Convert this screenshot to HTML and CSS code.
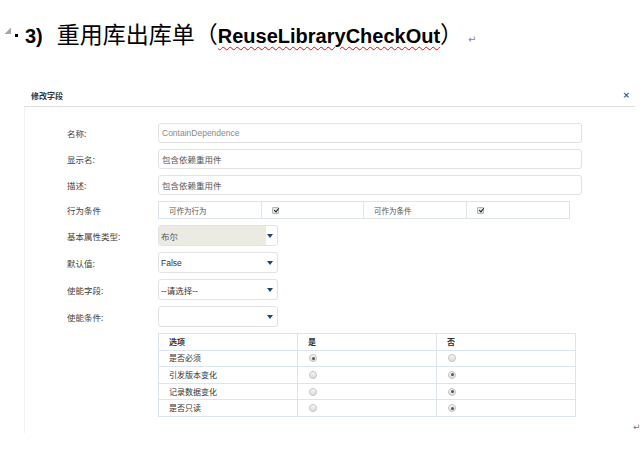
FILE: index.html
```html
<!DOCTYPE html>
<html lang="zh">
<head>
<meta charset="utf-8">
<link rel="stylesheet" href="styles.css">
</head>
<body>
<div class="doc">
  <div class="title">
    <span class="mark"></span><span class="bullet"></span>
    <span class="num">3)</span>
    <span class="cn">重用库出库单（</span><span class="en">ReuseLibraryCheckOut</span><span class="cn">）</span><span class="ret">↵</span>
  </div>

  <div class="panel">
    <div class="panel-head">
      <span class="panel-title">修改字段</span>
      <span class="close">×</span>
    </div>
    <div class="panel-body">
      <div class="row">
        <span class="label">名称:</span>
        <div class="input muted">ContainDependence</div>
      </div>
      <div class="row">
        <span class="label">显示名:</span>
        <div class="input">包含依赖重用件</div>
      </div>
      <div class="row">
        <span class="label">描述:</span>
        <div class="input">包含依赖重用件</div>
      </div>
      <div class="row">
        <span class="label">行为条件</span>
        <div class="behave">
          <div class="bcell">可作为行为</div>
          <div class="bcell"><span class="check"></span></div>
          <div class="bcell">可作为条件</div>
          <div class="bcell"><span class="check"></span></div>
        </div>
      </div>
      <div class="row">
        <span class="label">基本属性类型:</span>
        <div class="select disabled"><span class="val">布尔</span><span class="arrow"></span></div>
      </div>
      <div class="row">
        <span class="label">默认值:</span>
        <div class="select"><span class="val muted2">False</span><span class="arrow"></span></div>
      </div>
      <div class="row">
        <span class="label">使能字段:</span>
        <div class="select"><span class="val">--请选择--</span><span class="arrow"></span></div>
      </div>
      <div class="row">
        <span class="label">使能条件:</span>
        <div class="select"><span class="val"></span><span class="arrow"></span></div>
      </div>
      <div class="row top">
        <span class="label"></span>
        <table class="opts">
          <tr><th>选项</th><th>是</th><th>否</th></tr>
          <tr><td>是否必须</td><td><span class="radio on"></span></td><td><span class="radio"></span></td></tr>
          <tr><td>引发版本变化</td><td><span class="radio"></span></td><td><span class="radio on"></span></td></tr>
          <tr><td>记录数据变化</td><td><span class="radio"></span></td><td><span class="radio on"></span></td></tr>
          <tr><td>是否只读</td><td><span class="radio"></span></td><td><span class="radio on"></span></td></tr>
        </table>
      </div>
    </div>
  </div>
  <span class="ret-end">↵</span>
</div>
</body>
</html>
```

FILE: styles.css
```css
* { box-sizing: border-box; }
html, body { margin: 0; padding: 0; background: #fff; }
body {
  width: 642px;
  height: 464px;
  overflow: hidden;
  font-family: "Liberation Sans", "Noto Sans CJK SC", sans-serif;
  color: #333;
}
.doc { position: relative; height: 464px; }

/* heading line */
.title {
  height: 85px;
  padding: 16px 0 0 5px;
  display: flex;
  align-items: baseline;
  line-height: 32px;
  white-space: nowrap;
}
.mark {
  display: inline-block;
  width: 6px; height: 6px;
  background: linear-gradient(to bottom right, transparent 50%, #a8a8a8 50%);
  margin-right: 4px;
  transform: translateY(-9px);
}
.bullet {
  display: inline-block;
  width: 3px; height: 3px;
  background: #000;
  margin-right: 7px;
  transform: translateY(-6px);
}
.num {
  font: bold 20px "Liberation Sans", sans-serif;
  color: #000;
  margin-right: 14px;
}
.cn {
  font: 23px "Noto Sans CJK SC", sans-serif;
  color: #000;
}
.en {
  font: bold 20px "Liberation Sans", sans-serif;
  color: #000;
  text-decoration: underline wavy #e01010;
  text-decoration-thickness: 1px;
  text-underline-offset: 3px;
}
.ret {
  font: 10px "DejaVu Sans", sans-serif;
  color: #888;
  margin-left: 5px;
}

/* panel */
.panel { margin-left: 24px; width: 611px; }
.panel-head {
  height: 22px;
  border-bottom: 1px solid #dedede;
  display: flex;
  align-items: center;
  justify-content: space-between;
  padding: 0 5px 1px 7px;
}
.panel-title {
  font: bold 8px "Noto Sans CJK SC", sans-serif;
  color: #333;
}
.close {
  font: bold 9px "DejaVu Sans", sans-serif;
  color: #2c5d9a;
}
.panel-body {
  border-left: 1px solid #f1f1f1;
  height: 326px;
  padding: 16px 0 0 42px;
  display: flex;
  flex-direction: column;
  gap: 6px;
}
.row {
  display: grid;
  grid-template-columns: 91px auto;
  align-items: center;
  justify-items: start;
}
.row.top { align-items: start; }
.label {
  font: 8.5px "Noto Sans CJK SC", sans-serif;
  color: #444;
}

.input {
  width: 424px;
  height: 20px;
  border: 1px solid #e2e2e2;
  border-radius: 3px;
  padding: 0 0 0 3px;
  font: 8.5px "Liberation Sans", "Noto Sans CJK SC", sans-serif;
  color: #555;
  display: flex;
  align-items: center;
}
.muted { color: #8a8a8a; }
.muted2 { color: #777; }

.behave {
  width: 412px;
  height: 18px;
  border: 1px solid #dbe4ef;
  display: grid;
  grid-template-columns: 103px 102px 103px 1fr;
}
.bcell {
  border-right: 1px solid #dbe4ef;
  padding-left: 10px;
  display: flex;
  align-items: center;
  font: 7.5px "Noto Sans CJK SC", sans-serif;
  color: #555;
}
.bcell:last-child { border-right: 0; }
.check {
  width: 7px; height: 7px;
  border: 1px solid #b5b5b5;
  border-radius: 1px;
  background: #e6e6e6;
  position: relative;
}
.check::after {
  content: "";
  position: absolute;
  left: 1.5px; top: -0.5px;
  width: 2px; height: 4px;
  border: solid #222;
  border-width: 0 1.5px 1.5px 0;
  transform: rotate(40deg);
}

.select {
  width: 120px;
  height: 21px;
  border: 1px solid #e2e2e2;
  border-radius: 3px;
  display: flex;
  align-items: stretch;
  overflow: hidden;
}
.select .val {
  flex: 1;
  display: flex;
  align-items: center;
  padding-left: 2px;
  font: 8.5px "Liberation Sans", "Noto Sans CJK SC", sans-serif;
  color: #333;
}
.select.disabled .val { background: #ebebe4; color: #555; }
.arrow {
  width: 11px;
  display: flex;
  align-items: center;
  justify-content: flex-start;
}
.arrow::before {
  content: "";
  width: 0; height: 0;
  border-left: 3px solid transparent;
  border-right: 3px solid transparent;
  border-top: 4px solid #1c4775;
  margin-left: 1px;
}

.opts {
  width: 418px;
  border-collapse: collapse;
  table-layout: fixed;
  font: 8px "Noto Sans CJK SC", sans-serif;
  color: #333;
}
.opts th, .opts td {
  border: 1px solid #dbe4ef;
  height: 16.6px;
  padding: 0 0 0 10px;
  text-align: left;
  line-height: 10px;
}
.opts th { font-weight: bold; }
.opts th:nth-child(1) { width: 139px; }
.opts th:nth-child(2) { width: 139px; }
.radio {
  display: block;
  width: 8px; height: 8px;
  border-radius: 50%;
  border: 1px solid #c4c4c4;
  background: linear-gradient(#f6f6f6, #dcdcdc);
  margin-left: 1px;
  position: relative;
}
.radio.on::after {
  content: "";
  position: absolute;
  left: 1.5px; top: 1.5px;
  width: 3px; height: 3px;
  border-radius: 50%;
  background: #555;
}

.ret-end {
  position: absolute;
  left: 633px;
  top: 422px;
  font: 9px "DejaVu Sans", sans-serif;
  color: #777;
}
```
